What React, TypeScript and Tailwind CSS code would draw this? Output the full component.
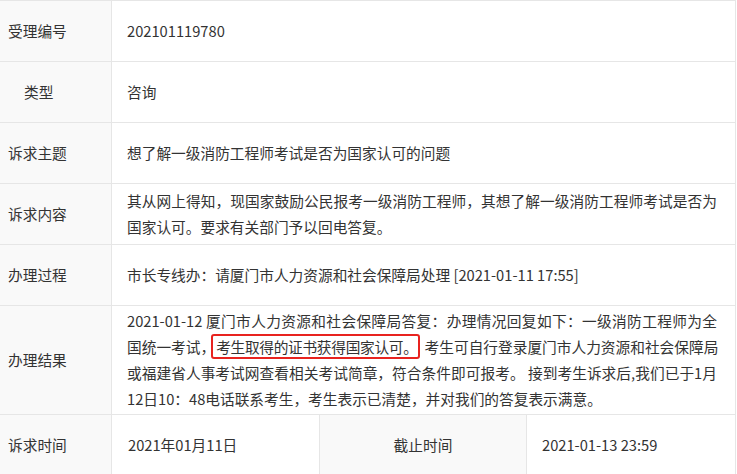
import React from "react";

const font = { fontFamily: '"Noto Sans CJK SC", "Noto Sans", sans-serif' };

function Row({ label, children, h, labelClass = "pl-[8px]" }: { label: string; children: React.ReactNode; h: string; labelClass?: string }) {
  return (
    <div className={`flex border-b border-[#e6e6e6] ${h}`}>
      <div className={`w-[112px] shrink-0 bg-[#f9f9f9] border-r border-[#e6e6e6] flex items-center ${labelClass}`}>{label}</div>
      <div className="flex-1 flex items-center pl-[15px] leading-[26px]">{children}</div>
    </div>
  );
}

function J({ children }: { children: React.ReactNode }) {
  return <div className="w-[590px] whitespace-nowrap text-justify [text-align-last:justify]">{children}</div>;
}

export default function App() {
  return (
    <div className="w-[737px] h-[474px] bg-white overflow-hidden text-[14.7px] text-[#333]" style={font}>
      <div className="w-[736px] border-t border-r border-[#e6e6e6]">
        <Row label="受理编号" h="h-[61px]">202101119780</Row>
        <Row label="类型" h="h-[61px]" labelClass="pl-[24px]">咨询</Row>
        <Row label="诉求主题" h="h-[61px]">想了解一级消防工程师考试是否为国家认可的问题</Row>
        <Row label="诉求内容" h="h-[61px]">
          <div>
            <J>其从网上得知，现国家鼓励公民报考一级消防工程师，其想了解一级消防工程师考试是否为</J>
            <div className="whitespace-nowrap">国家认可。要求有关部门予以回电答复。</div>
          </div>
        </Row>
        <Row label="办理过程" h="h-[61px]">市长专线办：请厦门市人力资源和社会保障局处理 [2021-01-11 17:55]</Row>
        <Row label="办理结果" h="h-[109px]">
          <div>
            <J>2021-01-12 厦门市人力资源和社会保障局答复：办理情况回复如下：一级消防工程师为全</J>
            <J>
              国统一考试，<span className="inline-block leading-[21px] border-2 border-[#e8231f] rounded-[3px] pl-[3px] pr-0 -ml-[4px] mr-[5px] tracking-[-0.3px]">考生取得的证书获得国家认可。</span>考生可自行登录厦门市人力资源和社会保障局
            </J>
            <J>或福建省人事考试网查看相关考试简章，符合条件即可报考。 接到考生诉求后,我们已于1月</J>
            <div className="whitespace-nowrap">12日10：48电话联系考生，考生表示已清楚，并对我们的答复表示满意。</div>
          </div>
        </Row>
        <div className="flex h-[61px] border-b border-[#e6e6e6]">
          <div className="w-[112px] shrink-0 bg-[#f9f9f9] border-r border-[#e6e6e6] flex items-center pl-[8px]">诉求时间</div>
          <div className="w-[208px] shrink-0 border-r border-[#e6e6e6] flex items-center pl-[16px]">2021年01月11日</div>
          <div className="w-[207px] shrink-0 bg-[#f9f9f9] border-r border-[#e6e6e6] flex items-center justify-center">截止时间</div>
          <div className="flex-1 flex items-center pl-[15px]">2021-01-13 23:59</div>
        </div>
      </div>
    </div>
  );
}
